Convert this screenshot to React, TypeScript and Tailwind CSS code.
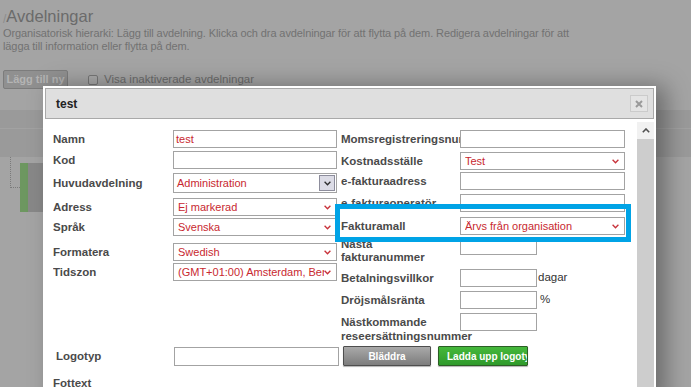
import React from 'react';

const font = { fontFamily: '"Liberation Sans", Arial, sans-serif' };

function Chevron({ color = '#c8323a' }: { color?: string }) {
  return (
    <svg width="7" height="5" viewBox="0 0 7 5" className="shrink-0">
      <polyline points="0.6,0.8 3.5,3.8 6.4,0.8" fill="none" stroke={color} strokeWidth="1.3" />
    </svg>
  );
}

function TextBox({ value, w, h = 'h-[18px]' }: { value?: string; w: string; h?: string }) {
  return (
    <div className={`${w} ${h} shrink-0 border border-[#a3a3a3] bg-white flex items-center px-[2px] text-[11px] text-[#c8282f] overflow-hidden whitespace-nowrap`}>
      {value}
    </div>
  );
}

function SelectBox({ value, w }: { value: string; w: string }) {
  return (
    <div className={`${w} h-[18px] shrink-0 border border-[#a3a3a3] bg-white flex items-center pl-[4px] pr-[5px] text-[11px] text-[#c8282f] overflow-hidden whitespace-nowrap`}>
      <span className="flex-1 overflow-hidden">{value}</span>
      <Chevron />
    </div>
  );
}

function Label({ children, w }: { children: React.ReactNode; w: string }) {
  return <div className={`${w} shrink-0 text-[11.5px] font-bold text-[#4a4a4a] whitespace-nowrap overflow-hidden leading-[14px]`}>{children}</div>;
}

export default function App() {
  return (
    <div className="relative w-[699px] h-[387px] overflow-hidden bg-[#a4a4a4] flex" style={font}>
      {/* page behind the overlay */}
      <div className="flex-1 flex flex-col">
        <div className="pt-[3px] pl-[3px] flex items-end h-[27px]">
          <span className="text-[12px] text-[#8c8c8c] leading-[16px]">/</span>
          <span className="text-[16.5px] leading-[22px] text-[#6b6b6b]">Avdelningar</span>
        </div>
        <div className="pl-[3px] text-[11px] tracking-[-0.1px] leading-[13px] text-[#727272]">
          Organisatorisk hierarki: Lägg till avdelning. Klicka och dra avdelningar för att flytta på dem. Redigera avdelningar för att
          <br />
          lägga till information eller flytta på dem.
        </div>
        <div className="mt-[17px] pl-[3px] flex items-center">
          <div className="w-[65px] h-[19px] border border-[#7c7c7c] bg-[#909090] rounded-[2px] flex items-center justify-center text-[11px] font-bold text-[#b4b4b4]">
            Lägg till ny
          </div>
          <div className="ml-[20px] w-[10px] h-[10px] border border-[#777] rounded-[2px] bg-[#a9a9a9]" />
          <span className="ml-[6px] text-[11.5px] text-[#6b6b6b]">Visa inaktiverade avdelningar</span>
        </div>
        <div className="mt-[21px] h-[47px] bg-[#9a9a9a] flex flex-col">
          <div className="h-[18px]" />
          <div className="h-px bg-[#a2a2a2]" />
        </div>
        <div className="flex pl-[10px]">
          <div className="w-[10px] h-[31px] border-l border-b border-dotted border-[#7a7a7a]" />
          <div className="mt-[6px] w-[8px] h-[49px] bg-[#6d9760]" />
          <div className="mt-[6px] w-[20px] h-[49px] bg-[#888888]" />
        </div>
      </div>
      <div className="w-[8px] bg-white" />

      {/* modal */}
      <div className="absolute left-[43px] top-[86px] w-[613px] h-[320px] bg-white p-[2px] shadow-[10px_0_22px_rgba(0,0,0,0.35)] flex flex-col">
        <div className="h-[31px] shrink-0 border border-[#a9a9a9] bg-[#dfdfdf] flex items-center pl-[10px] pr-[5px]">
          <span className="flex-1 text-[12px] font-bold text-[#222]">test</span>
          <div className="w-[18px] h-[17px] border border-[#cbcbcb] bg-[#e4e4e4] flex items-center justify-center">
            <svg width="8" height="8" viewBox="0 0 8 8">
              <path d="M1 1 L7 7 M7 1 L1 7" stroke="#9a9a9a" strokeWidth="2" />
            </svg>
          </div>
        </div>
        <div className="flex-1 flex">
          <div className="flex-1 pt-[11px] pl-[8px] flex flex-col">
            <div className="flex">
              {/* left column */}
              <div className="w-[284px] flex flex-col">
                <div className="flex items-center">
                  <Label w="w-[120px]">Namn</Label>
                  <TextBox value="test" w="w-[164px]" />
                </div>
                <div className="mt-[3px] flex items-center">
                  <Label w="w-[120px]">Kod</Label>
                  <TextBox w="w-[164px]" />
                </div>
                <div className="mt-[4px] flex items-center">
                  <Label w="w-[120px]">Huvudavdelning</Label>
                  <div className="w-[164px] h-[20px] border border-[#a3a3a3] bg-white flex items-center pl-[3px] text-[11px] text-[#c8282f]">
                    <span className="flex-1">Administration</span>
                    <div className="w-[16px] h-[16px] mr-px border border-[#8d8d9c] bg-[#dcdce6] flex items-center justify-center">
                      <Chevron color="#2e2e2e" />
                    </div>
                  </div>
                </div>
                <div className="mt-[5px] flex items-center">
                  <Label w="w-[120px]">Adress</Label>
                  <SelectBox value="Ej markerad" w="w-[164px]" />
                </div>
                <div className="mt-[2px] flex items-center">
                  <Label w="w-[120px]">Språk</Label>
                  <SelectBox value="Svenska" w="w-[164px]" />
                </div>
                <div className="mt-[7px] flex items-center">
                  <Label w="w-[120px]">Formatera</Label>
                  <SelectBox value="Swedish" w="w-[164px]" />
                </div>
                <div className="mt-[2px] flex items-center">
                  <Label w="w-[120px]">Tidszon</Label>
                  <SelectBox value="(GMT+01:00) Amsterdam, Berlin, Bern, Rom, Stockholm, Wien" w="w-[164px]" />
                </div>
              </div>

              {/* right column */}
              <div className="ml-[4px] w-[284px] flex flex-col">
                <div className="flex items-center">
                  <Label w="w-[119px]">Momsregistreringsnummer</Label>
                  <TextBox w="w-[165px]" />
                </div>
                <div className="mt-[4px] flex items-center">
                  <Label w="w-[119px]">Kostnadsställe</Label>
                  <SelectBox value="Test" w="w-[165px]" />
                </div>
                <div className="mt-[2px] flex items-center">
                  <Label w="w-[119px]">e-fakturaadress</Label>
                  <TextBox w="w-[165px]" />
                </div>
                <div className="mt-[4px] flex items-center">
                  <Label w="w-[119px]">e-fakturaoperatör</Label>
                  <TextBox w="w-[165px]" />
                </div>
                <div className="mt-[5px] flex items-center">
                  <Label w="w-[119px]">Fakturamall</Label>
                  <SelectBox value="Ärvs från organisation" w="w-[165px]" />
                </div>
                <div className="mt-[2px] h-[32px] flex items-start">
                  <div className="w-[119px] pt-[1px] text-[11.5px] font-bold text-[#4a4a4a] leading-[13px]">
                    Nästa<br />fakturanummer
                  </div>
                  <TextBox w="w-[77px]" />
                </div>
                <div className="flex items-center">
                  <Label w="w-[119px]">Betalningsvillkor</Label>
                  <TextBox w="w-[77px]" />
                  <span className="ml-px text-[11.5px] text-[#333]">dagar</span>
                </div>
                <div className="mt-[4px] flex items-center">
                  <Label w="w-[119px]">Dröjsmålsränta</Label>
                  <TextBox w="w-[77px]" />
                  <span className="ml-[3px] text-[11.5px] text-[#333]">%</span>
                </div>
                <div className="mt-[4px] h-[31px] flex items-start">
                  <div className="w-[119px] pt-[2px] text-[11.5px] font-bold text-[#4a4a4a] leading-[14px] whitespace-nowrap">
                    Nästkommande<br />reseersättningsnummer
                  </div>
                  <TextBox w="w-[77px]" />
                </div>
              </div>
            </div>

            <div className="mt-[2px] pl-[3px] flex items-center">
              <Label w="w-[118px]">Logotyp</Label>
              <TextBox w="w-[165px]" h="h-[19px]" />
              <div className="ml-[4px] w-[88px] h-[20px] border border-[#4e4e4e] bg-gradient-to-b from-[#a9a9a9] to-[#7d7d7d] rounded-[1px] shadow-[0_1px_1px_rgba(0,0,0,0.3)] flex items-center justify-center text-[10px] font-bold text-white">
                Bläddra
              </div>
              <div className="ml-[7px] w-[90px] h-[20px] border border-[#2c5e25] bg-gradient-to-b from-[#45b83b] to-[#2f9a2b] rounded-[1px] shadow-[0_1px_1px_rgba(0,0,0,0.3)] flex items-center pl-[8px] overflow-hidden whitespace-nowrap text-[10px] font-bold text-white">
                Ladda upp logotyp
              </div>
            </div>
            <div className="mt-[10px] text-[11.5px] font-bold text-[#4a4a4a] leading-[14px]">Fottext</div>
          </div>

          {/* scrollbar */}
          <div className="w-[17px] mt-[3px] flex flex-col">
            <div className="h-[17px] bg-[#f1f1f1] flex items-center justify-center">
              <svg width="8" height="5" viewBox="0 0 8 5">
                <polyline points="0.8,4.2 4,1 7.2,4.2" fill="none" stroke="#505050" strokeWidth="1.6" />
              </svg>
            </div>
            <div className="flex-1 bg-[#cdcdcd]" />
          </div>
        </div>
      </div>

      {/* highlight annotation */}
      <div className="absolute left-[335px] top-[204px] w-[296px] h-[38px] border-[5px] border-[#00a3e6]" />
    </div>
  );
}
